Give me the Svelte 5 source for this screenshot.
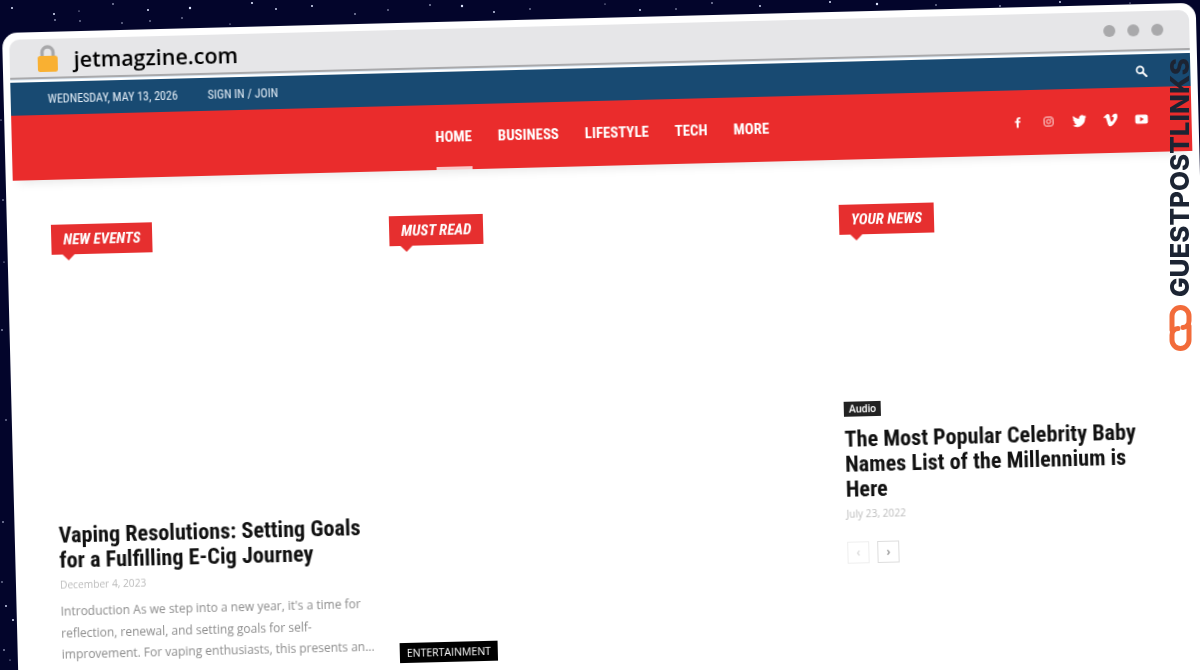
<script lang="ts">
  // scattered stars behind the tilted browser window
  const stars = [
    [12, 8, 1], [54, 14, 1], [80, 21, 0.7], [113, 4, 0.8], [148, 10, 1], [79, 11, 0.6], [190, 8, 1.2],
    [182, 18, 0.7], [252, 3, 1.1], [276, 9, 0.9], [312, 6, 1], [355, 14, 0.8], [388, 10, 0.7], [230, 24, 0.6],
    [430, 5, 0.8], [462, 6, 1.2], [494, 12, 0.9], [530, 9, 0.7], [605, 4, 0.6], [640, 10, 0.9], [676, 9, 0.7],
    [712, 3, 0.8], [760, 6, 0.9], [830, 2, 1], [877, 4, 1.2], [936, 5, 0.7], [1000, 6, 0.8], [1060, 2, 0.9],
    [1130, 3, 0.6], [55, 20, 0.8], [122, 23, 0.7], [150, 21, 0.7], [4, 60, 0.8], [1, 120, 0.6], [3, 200, 0.7],
    [4, 262, 0.6], [2, 330, 0.8], [6, 420, 0.7], [3, 522, 0.8], [2, 582, 0.7], [6, 606, 0.9], [13, 620, 1],
    [4, 650, 0.8], [10, 660, 0.6]
  ]
  const nav = ['Home', 'Business', 'Lifestyle', 'Tech', 'More']
</script>

<div class="desktop">
  <svg class="stars" width="1200" height="670" aria-hidden="true">
    {#each stars as [x, y, r]}
      <circle cx={x} cy={y} {r} fill="#dfe6ff" />
    {/each}
  </svg>

  <div class="window">
    <div class="address">
      <svg class="lock" width="24" height="29" viewBox="0 0 24 29" aria-hidden="true">
        <path d="M6.500 14V8.500a5.500 5.500 0 0 1 11 0V14" fill="none" stroke="#a8a8aa" stroke-width="3.400" />
        <rect x="2" y="12" width="20" height="16" rx="2.500" fill="#f9b032" />
      </svg>
      <span class="domain">jetmagzine.com</span>
      <div class="dots"><i></i><i></i><i></i></div>
    </div>

    <div class="topbar">
      <span class="date cond">WEDNESDAY, MAY 13, 2026</span>
      <span class="sign cond">SIGN IN / JOIN</span>
      <svg class="search" width="12" height="12" viewBox="0 0 12 12" aria-hidden="true">
        <circle cx="4.800" cy="4.800" r="3.400" fill="none" stroke="#fff" stroke-width="1.700" />
        <path d="M7.400 7.400L11 11" stroke="#fff" stroke-width="2" stroke-linecap="round" />
      </svg>
    </div>

    <div class="menu">
      <nav>
        {#each nav as item, i}
          <a href="#top" class:active={i === 0}>{item}</a>
        {/each}
      </nav>
      <div class="social">
        <svg width="14" height="14" viewBox="0 0 14 14" aria-hidden="true">
          <path d="M8 12.500V7.600h1.600l.3-1.900H8V4.600c0-.6.2-.9.900-.9h1V2c-.3 0-.8-.1-1.300-.1C7 1.900 6 2.800 6 4.400v1.300H4.400v1.900H6v4.900z" fill="#fff" />
        </svg>
        <svg width="14" height="14" viewBox="0 0 14 14" aria-hidden="true">
          <rect x="2.500" y="2.500" width="9" height="9" rx="2.500" fill="none" stroke="#fbdcdc" stroke-width="1" />
          <circle cx="7" cy="7" r="2.100" fill="none" stroke="#fbdcdc" stroke-width="1" />
          <circle cx="9.600" cy="4.400" r=".6" fill="#fbdcdc" />
        </svg>
        <svg width="14" height="14" viewBox="0 0 24 24" aria-hidden="true">
          <path d="M23.500 4.600c-.9.400-1.800.6-2.800.8 1-.6 1.800-1.500 2.100-2.700-.9.600-2 1-3.100 1.200A4.900 4.900 0 0 0 11.400 8.400C7.400 8.200 3.800 6.300 1.400 3.300a4.900 4.900 0 0 0 1.500 6.500c-.8 0-1.500-.2-2.200-.6 0 2.400 1.700 4.400 3.900 4.900-.7.200-1.500.2-2.200.1.600 2 2.400 3.400 4.600 3.400A9.900 9.900 0 0 1 0 20.100 13.900 13.900 0 0 0 21.500 7.700c1-.7 1.800-1.600 2-3.100z" fill="#fff" />
        </svg>
        <svg width="14" height="14" viewBox="0 0 24 24" aria-hidden="true">
          <path d="M23.900 6.900c-.1 2.300-1.700 5.500-4.900 9.600-3.300 4.300-6 6.400-8.300 6.400-1.400 0-2.600-1.300-3.600-3.900L5.200 11.400C4.500 8.800 3.700 7.500 2.900 7.500c-.2 0-.8.400-1.900 1.100L0 7.200c1.200-1.100 2.400-2.100 3.600-3.200C5.200 2.600 6.400 1.900 7.200 1.800c1.900-.2 3.100 1.100 3.500 3.900.5 3 .8 4.900 1 5.600.6 2.500 1.200 3.800 1.900 3.800.5 0 1.300-.8 2.300-2.400 1-1.600 1.600-2.900 1.700-3.700.1-1.400-.4-2.100-1.700-2.100-.6 0-1.200.1-1.800.4C15.300 3.300 17.700 1.300 21.200 1.400c2.600.1 2.800 2.100 2.700 5.500z" fill="#fff" />
        </svg>
        <svg width="14" height="14" viewBox="0 0 14 14" aria-hidden="true">
          <path fill-rule="evenodd" d="M2.500 2.500h9a1.800 1.800 0 0 1 1.800 1.800v5.400a1.800 1.800 0 0 1-1.800 1.800h-9A1.800 1.800 0 0 1 .7 9.700V4.300a1.800 1.800 0 0 1 1.800-1.800zM5.600 4.800v4.400L9.400 7z" fill="#fff" />
        </svg>
      </div>
    </div>

    <main class="content">
      <section class="col first">
        <h4 class="label">New Events</h4>
        <article class="vaping">
          <h3 class="title cond">Vaping Resolutions: Setting Goals for a Fulfilling E-Cig Journey</h3>
          <time>December 4, 2023</time>
          <p>Introduction As we step into a new year, it's a time for reflection, renewal, and setting goals for self-improvement. For vaping enthusiasts, this presents an...</p>
        </article>
      </section>

      <section class="col second">
        <h4 class="label">Must Read</h4>
        <span class="tag-black">ENTERTAINMENT</span>
      </section>

      <section class="col third">
        <h4 class="label">Your News</h4>
        <article class="audio">
          <span class="tag-audio">Audio</span>
          <h3 class="title cond">The Most Popular Celebrity Baby Names List of the Millennium is Here</h3>
          <time>July 23, 2022</time>
          <div class="pager">
            <button type="button" class="off" aria-label="previous">‹</button>
            <button type="button" aria-label="next">›</button>
          </div>
        </article>
      </section>
    </main>
  </div>

  <div class="brand">
    <span>GUESTPOSTLINKS</span>
    <svg width="23" height="46" viewBox="0 0 23 46" aria-hidden="true">
      <path d="M3 25V11a8.500 8.500 0 0 1 17 0v5a6.500 6.500 0 0 1-6 6.500" fill="none" stroke="#f26b3a" stroke-width="5" stroke-linecap="round" />
      <path d="M20 21V35a8.500 8.500 0 0 1-17 0v-5a6.500 6.500 0 0 1 6-6.500" fill="none" stroke="#f26b3a" stroke-width="5" stroke-linecap="round" />
    </svg>
  </div>
</div>

<style>
  :global(body) {
    margin: 0;
  }

  .desktop {
    position: relative;
    width: 1200px;
    height: 670px;
    overflow: hidden;
    background: #03052b;
  }

  .stars {
    position: absolute;
    inset: 0;
  }

  .window {
    position: absolute;
    left: 2px;
    top: 33px;
    width: 1194px;
    height: 700px;
    box-sizing: border-box;
    padding: 7px;
    background: #fff;
    border-radius: 15px;
    transform: rotate(-1.45deg);
    transform-origin: 0 0;
    filter: blur(0.3px);
  }

  .address {
    display: flex;
    align-items: center;
    height: 38px;
    padding: 0 26px;
    background: #e6e6e8;
    border-radius: 10px 10px 0 0;
    border-bottom: 2px solid #a9a9ab;
    box-shadow: 0 1px 0 #dbe8f4;
  }

  .lock {
    margin: 1px 12px 0 0;
  }

  .domain {
    margin: 3px 0 0 2px;
    font: 600 21.500px 'Open Sans', sans-serif;
    color: #000;
  }

  .dots {
    display: flex;
    gap: 12px;
    margin-left: auto;
  }

  .dots i {
    width: 12px;
    height: 12px;
    border-radius: 50%;
    background: #a9a9ab;
  }

  .cond {
    font-family: 'Roboto', sans-serif;
    font-stretch: 75%;
  }

  .topbar {
    display: flex;
    align-items: center;
    height: 33px;
    margin-top: 3px;
    padding: 0 43px 0 37px;
    background: #184a72;
    color: #e4eef7;
    font-size: 12px;
  }

  .sign {
    margin-left: 30px;
  }

  .search {
    margin-left: auto;
  }

  .menu {
    position: relative;
    display: flex;
    align-items: center;
    justify-content: center;
    box-sizing: border-box;
    height: 65px;
    padding-bottom: 1px;
    background: #ea2c2c;
    box-shadow: 0 8px 10px -6px rgba(0, 0, 0, 0.1);
  }

  nav {
    display: flex;
    gap: 26px;
    margin-left: 1px;
  }

  nav a {
    position: relative;
    font: 700 14.800px 'Roboto', sans-serif;
    font-stretch: 75%;
    color: #fff;
    text-decoration: none;
    text-transform: uppercase;
  }

  nav a.active::after {
    content: '';
    position: absolute;
    left: 0;
    right: 0;
    bottom: -24px;
    height: 3px;
    background: #f9c9c9;
  }

  .social {
    position: absolute;
    right: 43px;
    top: 25px;
    display: flex;
    gap: 17px;
  }

  .content {
    display: grid;
    grid-template-columns: 338px 450px 1fr;
    padding: 45px 0 0 37px;
  }

  .label {
    position: relative;
    display: inline-block;
    margin: 0;
    height: 30px;
    padding: 0 12px;
    background: #e62f2f;
    color: #fff;
    font: italic 700 15px/30px 'Roboto', sans-serif;
    font-stretch: 75%;
    text-transform: uppercase;
    vertical-align: top;
  }

  .label::after {
    content: '';
    position: absolute;
    left: 11px;
    top: 100%;
    border: 6px solid transparent;
    border-bottom: 0;
    border-top-color: #e62f2f;
  }

  .col {
    min-width: 0;
  }

  .vaping {
    margin-top: 268px;
    width: 320px;
  }

  .title {
    margin: 0;
    color: #111;
    font-size: 22.200px;
    font-weight: 700;
    line-height: 25px;
  }

  time {
    display: block;
    margin-top: 5px;
    color: #bcbcbc;
    font: 10.200px/15px 'Open Sans', sans-serif;
  }

  .vaping p {
    margin: 8px 0 0;
    color: #8c8c8c;
    font: 12px/21.500px 'Open Sans', sans-serif;
  }

  .tag-black {
    display: block;
    width: max-content;
    margin-top: 397px;
    padding: 0 7px;
    background: #000;
    color: #fff;
    font: 500 10.500px/20px 'Open Sans', sans-serif;
  }

  .audio {
    margin-top: 167px;
    width: 320px;
  }

  .tag-audio {
    display: block;
    width: max-content;
    height: 15px;
    margin-bottom: 10px;
    padding: 0 5px;
    background: #222;
    color: #fff;
    font: 500 10.500px/15px 'Roboto', sans-serif;
  }

  .pager {
    display: flex;
    gap: 8px;
    margin-top: 20px;
  }

  .pager button {
    width: 22px;
    height: 22px;
    padding: 0;
    border: 1px solid #ddd;
    background: #fff;
    color: #666;
    font: 12px/18px 'Open Sans', sans-serif;
  }

  .pager .off {
    border-color: #eee;
    color: #ccc;
  }

  .brand {
    position: absolute;
    left: 1168px;
    top: 58px;
    display: flex;
    flex-direction: column;
    align-items: center;
    gap: 8px;
    color: #1c2433;
    font: 800 26px/24px 'Inter', sans-serif;
    white-space: nowrap;
  }

  .brand span {
    writing-mode: vertical-rl;
    transform: rotate(180deg);
  }
</style>
